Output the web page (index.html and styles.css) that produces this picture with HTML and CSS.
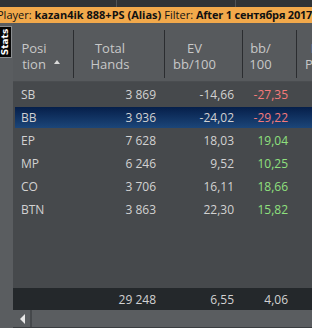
FILE: index.html
```html
<!DOCTYPE html>
<html>
<head>
<meta charset="utf-8">
<link rel="stylesheet" href="styles.css">
</head>
<body>
<div class="top">
  <div class="tcell c1"></div>
  <div class="tcell c2"></div>
  <div class="tcell c3"></div>
</div>
<div class="filter"><span>Player: </span><b>kazan4ik 888+PS (Alias)</b><span class="gap">Filter: </span><b class="fv">After 1 сентября 2017</b></div>
<div class="main">
  <div class="side">
    <div class="tab"><span>Stats</span></div>
  </div>
  <div class="content">
    <div class="head">
      <div class="hc h1"><div class="ht">Posi<br>tion</div><div class="arrow"><span class="tri"></span></div></div>
      <div class="hc h2 sep"><div class="ht">Total<br>Hands</div><div class="arrow"></div></div>
      <div class="hc h3 sep"><div class="ht">EV<br>bb/100</div><div class="arrow"></div></div>
      <div class="hc h4 sep"><div class="ht">bb/<br>100</div><div class="arrow"></div></div>
      <div class="hc h5 sep"><div class="ht">Net<br>Profit</div></div>
    </div>
    <div class="rows">
      <div class="row"><span class="pos">SB</span><span class="n">3 869</span><span class="n">-14,66</span><span class="n neg">-27,35</span></div>
      <div class="row sel"><span class="pos">BB</span><span class="n">3 936</span><span class="n">-24,02</span><span class="n neg">-29,22</span></div>
      <div class="row"><span class="pos">EP</span><span class="n">7 628</span><span class="n">18,03</span><span class="n pos-v">19,04</span></div>
      <div class="row"><span class="pos">MP</span><span class="n">6 246</span><span class="n">9,52</span><span class="n pos-v">10,25</span></div>
      <div class="row"><span class="pos">CO</span><span class="n">3 706</span><span class="n">16,11</span><span class="n pos-v">18,66</span></div>
      <div class="row"><span class="pos">BTN</span><span class="n">3 863</span><span class="n">22,30</span><span class="n pos-v">15,82</span></div>
    </div>
    <div class="total"><span class="pos"></span><span class="n">29 248</span><span class="n">6,55</span><span class="n">4,06</span></div>
    <div class="scroll">
      <div class="sbtn"><span class="ltri"></span></div>
      <div class="track"></div>
    </div>
  </div>
</div>
</body>
</html>
```
FILE: styles.css
```css
html, body {
  margin: 0;
  padding: 0;
}
body {
  width: 312px;
  height: 328px;
  overflow: hidden;
  background: #5a5d60;
  font-family: "Open Sans", "Noto Sans", sans-serif;
}
.top {
  height: 7px;
  background: #303336;
  display: flex;
}
.tcell {
  height: 7px;
}
.c1 { width: 116px; border-right: 1px solid #505356; }
.c2 { width: 118px; border-right: 1px solid #505356; }
.c3 { flex: 1; }
.filter {
  height: 16px;
  background: #f2a94b;
  color: #111;
  font-size: 11px;
  line-height: 16px;
  white-space: nowrap;
  overflow: hidden;
  margin-left: -3px;
}
.filter b { font-weight: 700; }
.filter .gap { margin-left: 3px; }
.filter .fv { letter-spacing: -0.2px; }
.main {
  display: flex;
  height: 305px;
}
.side {
  width: 13px;
  background: #5a5d60;
  flex: none;
  padding-top: 3px;
}
.tab {
  width: 11px;
  height: 30px;
  background: #050505;
  border: 1px solid #8a8d90;
  border-left: none;
  display: flex;
  align-items: center;
  justify-content: center;
  overflow: visible;
}
.tab span {
  display: block;
  transform: rotate(-90deg);
  color: #fff;
  font-size: 9px;
  line-height: 10px;
  font-weight: 700;
  font-family: "DejaVu Sans", sans-serif;
  white-space: nowrap;
}
.content {
  flex: 1;
  display: flex;
  flex-direction: column;
  min-width: 0;
}
.head {
  height: 59px;
  background: #575a5d;
  display: grid;
  grid-template-columns: 60px 91px 78px 54px 40px;
  border-bottom: 1px solid #4a4d50;
  box-sizing: border-box;
  padding: 7px 0 3px;
}
.hc {
  display: flex;
  align-items: center;
  justify-content: center;
  color: #c8c8c8;
  font-size: 13px;
  line-height: 16px;
}
.hc.sep { border-left: 1px solid #2b2d30; }
.ht {
  text-align: center;
  padding-top: 3px;
}
.arrow {
  width: 18px;
  height: 32px;
  display: flex;
  align-items: center;
  justify-content: center;
}
.tri {
  width: 0;
  height: 0;
  border-left: 3px solid transparent;
  border-right: 3px solid transparent;
  border-bottom: 4px solid #dadada;
  margin-top: 16px;
  margin-left: 2px;
}
.h5 { justify-content: flex-start; padding-left: 8px; }
.rows {
  flex: 1;
  background: #46494c;
  padding: 1px 0 0 2px;
}
.row, .total {
  display: grid;
  grid-template-columns: 58px 91px 78px 54px;
  height: 23px;
  align-items: center;
  font-size: 12px;
  color: #d2d2d2;
}
.row.sel {
  background: linear-gradient(#061f4a, #1c4679);
  height: 21px;
  margin: 1px 0;
}
.pos { padding-left: 6px; }
.n { text-align: right; padding-right: 8px; }
.neg { color: #f57a7a; }
.pos-v { color: #8fe07e; }
.total {
  background: #24282b;
  height: 22px;
  padding-left: 2px;
}
.scroll {
  height: 17px;
  background: #5a5d60;
  display: flex;
  border-bottom: 1px solid #3a3d40;
}
.sbtn {
  width: 16px;
  margin-left: 1px;
  border-right: 2px solid #45484b;
  display: flex;
  align-items: center;
  justify-content: center;
}
.ltri {
  width: 0;
  height: 0;
  border-top: 5px solid transparent;
  border-bottom: 5px solid transparent;
  border-right: 5px solid #e8e8e8;
}
.track { flex: 1; }
```
